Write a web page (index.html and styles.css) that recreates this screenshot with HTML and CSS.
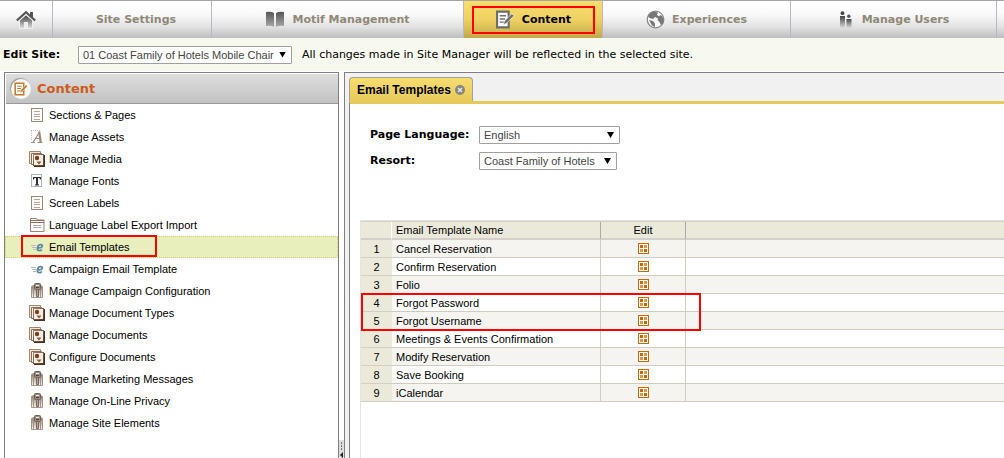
FILE: index.html
```html
<!DOCTYPE html>
<html lang="en">
<head>
<meta charset="utf-8">
<title>Site Manager - Content</title>
<link rel="stylesheet" href="styles.css">
</head>
<body>
<svg class="sprite" aria-hidden="true">
  <defs>
    <linearGradient id="g-dark" x1="0" y1="0" x2="0" y2="1"><stop offset="0" stop-color="#555"/><stop offset="1" stop-color="#aaa"/></linearGradient>
    <linearGradient id="g-fade" x1="0" y1="0" x2="0" y2="1"><stop offset="0" stop-color="#444"/><stop offset="1" stop-color="#ddd"/></linearGradient>
    <linearGradient id="g-brown" x1="0" y1="0" x2="0" y2="1"><stop offset="0" stop-color="#8b7768"/><stop offset="1" stop-color="#fbf9f7"/></linearGradient>
    <linearGradient id="g-card" x1="0" y1="0" x2="1" y2="1"><stop offset="0" stop-color="#a08468"/><stop offset="1" stop-color="#5c3d25"/></linearGradient>
    <symbol id="i-page" viewBox="0 0 16 16"><rect x="2.5" y="1.5" width="11" height="13" fill="#fdfbf9" stroke="#a08878"/><path d="M5 4.5h6M5 7.5h6M5 9.5h6M5 12.5h6" stroke="#b5a598"/></symbol>
    <symbol id="i-asset" viewBox="0 0 16 16"><path d="M2 1.5h9M2.500 2v9" stroke="#c8bfb8" stroke-dasharray="1 1" fill="none"/><path d="M2 13.500h4M4 13.500L10.500 3M6 9.500h5M8.500 13.500h5" stroke="#9b8b7f" stroke-width="1.200" fill="none"/><path d="M10.200 2.500l1.500 11" stroke="#9b8b7f" stroke-width="2.200"/></symbol>
    <symbol id="i-media" viewBox="0 0 16 16"><path d="M.5 .5h11v2h-8v10h-3z" fill="#efe7df" stroke="#a58468"/><path d="M2.500 2.500h10V5H5v8.500H2.500z" fill="#f7f1ea" stroke="#8d6c50"/><path d="M15.200 4v11.200H5" fill="none" stroke="#4c3220" stroke-width="1.600"/><rect x="4.500" y="3.500" width="10" height="11" fill="#f4eee8" stroke="url(#g-card)"/><circle cx="8" cy="7" r="2.200" fill="#7a4118"/><path d="M7.500 10.500h5L10 13.500z" fill="#8f5a2e"/></symbol>
    <symbol id="i-font" viewBox="0 0 16 16"><rect x="2.500" y="1.500" width="10" height="12" fill="#fbfdfe" stroke="#a9b5bb"/><path d="M4 4h8v2.500h-1L10.500 5H9v6.200l1 .3v1H6v-1l1-.3V5H5.500L5 6.500H4z" fill="#333"/></symbol>
    <symbol id="i-label" viewBox="0 0 16 16"><path d="M1.500 4V1.500h6l1 1.500h6.500v11.500H1.500z" fill="#fcfaf8" stroke="#9d8473"/><path d="M1 3.500h14M1 5.500h14" stroke="#8a705d"/><path d="M4 8.500h8M4 10.500h8" stroke="#a8aeb4"/></symbol>
    <symbol id="i-mail" viewBox="0 0 16 16"><path d="M2 6.500h5M3 8.500h4M4 10.500h3" stroke="#b4bcc0"/><path d="M8.300 8.700c3.500.6 5.200-.5 5-2-.2-1.600-3.200-1.500-4.300.5-1.300 2.300-.7 4.500 1.200 4.500 1.100 0 2-.4 2.700-1.200" fill="none" stroke="#5c87a0" stroke-width="1.800"/></symbol>
    <symbol id="i-site" viewBox="0 0 16 16"><path d="M2.500 3.500l2-1v12h-2zM4.500 2.500h7v12h-7zM13.500 3.500l-2-1v12h2z" fill="url(#g-brown)" stroke="#a59486"/><rect x="5.500" y=".5" width="6" height="6" rx="1" fill="#9a8e84" stroke="#6f5e52"/><path d="M7 2.500h3" stroke="#eee8e2"/><path d="M7 4.500h3" stroke="#4d3d32"/><path d="M7.500 6.500h2v7h-2z" fill="#b5a69a" stroke="#77665a"/></symbol>
    <symbol id="i-grid" viewBox="0 0 11 11"><rect x=".5" y=".5" width="10" height="10" fill="#fff" stroke="#cc6a00"/><path d="M2 2h3v3H2zM6 6h3v3H6z" fill="#cc6600"/><path d="M6 2h3v3H6zM2 6h3v3H2z" fill="#dd9850"/></symbol>
    <symbol id="i-note" viewBox="0 0 18 18"><path d="M1.500 1.500h11v15h-11z" fill="#fff" stroke="currentColor" stroke-width="2"/><path d="M4 5.500h6M4 8.500h5M4 11.500h4" stroke="currentColor" stroke-width="1.300"/><path d="M7.500 14l1-3.500L15.500 3.500l2 2-7 7z" fill="currentColor" stroke="#fff" stroke-width=".6"/></symbol>
  </defs>
</svg>

<nav class="nav" aria-label="Main">
  <a class="nav-item" href="#" aria-label="Home"><svg width="20" height="20" viewBox="0 0 20 20"><path d="M3 10.500L10 4l7 6.500V19H3z" fill="#eee"/><path d="M4 10.500L10 5.500l6 5V18h-4v-6H8v6H4z" fill="url(#g-fade)"/><path d="M14 2h3v5h-3z" fill="#555"/><path d="M.8 10.500L10 2.200l9.200 8.300" fill="none" stroke="#555" stroke-width="2.200"/></svg></a>
  <a class="nav-item plain" href="#">Site Settings</a>
  <a class="nav-item" href="#"><svg width="20" height="17" viewBox="0 0 20 17"><path d="M1 1q5-1 8 1v14q-3-2-8-1zM19 1q-5-1-8 1v14q3-2 8-1z" fill="url(#g-dark)"/></svg>Motif Management</a>
  <a class="nav-item active" href="#" aria-current="page"><svg class="note" width="20" height="19"><use href="#i-note"/></svg>Content</a>
  <a class="nav-item" href="#"><svg width="19" height="19" viewBox="0 0 19 19"><circle cx="9.500" cy="9.500" r="8.300" fill="#fafafa" stroke="#888" stroke-width="1.300"/><path d="M2 6l3-3.500 3-1 4 1-1 2.500 3 2-2 1.500L9 7 7 9 3.500 8zM3 10l4 1 2 2.500L9 17l-3-1.500zM14 5l2 1 1.500 3-.5 4-2 2-1.500-3-2-2z" fill="#777"/></svg>Experiences</a>
  <a class="nav-item" href="#"><svg width="17" height="18" viewBox="0 0 17 18"><circle cx="4.500" cy="2.200" r="1.900" fill="#444"/><path d="M2 5h5v12H2z" fill="url(#g-fade)"/><circle cx="10.800" cy="5.200" r="1.700" fill="#555"/><path d="M8.500 8h5v9h-5z" fill="url(#g-fade)"/></svg>Manage Users</a>
  <span class="nav-item"></span>
</nav>

<div class="sitebar">
  <label for="site">Edit Site:</label>
  <span class="pick site"><select id="site"><option>01 Coast Family of Hotels Mobile Chair</option></select></span>
  <span>All changes made in Site Manager will be reflected in the selected site.</span>
</div>

<div class="workspace">
  <aside class="side">
    <h2 class="side-title"><span class="disc"><svg width="14" height="14"><use href="#i-note"/></svg></span>Content</h2>
    <ul class="menu">
      <li><a href="#"><svg><use href="#i-page"/></svg>Sections &amp; Pages</a></li>
      <li><a href="#"><svg><use href="#i-asset"/></svg>Manage Assets</a></li>
      <li><a href="#"><svg><use href="#i-media"/></svg>Manage Media</a></li>
      <li><a href="#"><svg><use href="#i-font"/></svg>Manage Fonts</a></li>
      <li><a href="#"><svg><use href="#i-page"/></svg>Screen Labels</a></li>
      <li><a href="#"><svg><use href="#i-label"/></svg>Language Label Export Import</a></li>
      <li class="selected"><a href="#"><svg><use href="#i-mail"/></svg>Email Templates</a><span class="mark mark-menu"></span></li>
      <li><a href="#"><svg><use href="#i-mail"/></svg>Campaign Email Template</a></li>
      <li><a href="#"><svg><use href="#i-site"/></svg>Manage Campaign Configuration</a></li>
      <li><a href="#"><svg><use href="#i-media"/></svg>Manage Document Types</a></li>
      <li><a href="#"><svg><use href="#i-media"/></svg>Manage Documents</a></li>
      <li><a href="#"><svg><use href="#i-media"/></svg>Configure Documents</a></li>
      <li><a href="#"><svg><use href="#i-site"/></svg>Manage Marketing Messages</a></li>
      <li><a href="#"><svg><use href="#i-site"/></svg>Manage On-Line Privacy</a></li>
      <li><a href="#"><svg><use href="#i-site"/></svg>Manage Site Elements</a></li>
    </ul>
  </aside>
  <div class="splitter"><span class="handle"><svg width="5" height="18" viewBox="0 0 5 18"><path d="M2.500 2v9" stroke="#777" stroke-dasharray="2 1"/><path d="M4 12v6L1 15z" fill="#222"/></svg></span></div>

  <main class="main">
    <div class="tabs">
      <div class="tab">Email Templates<button type="button" aria-label="Close tab"><svg width="10" height="10" viewBox="0 0 10 10"><circle cx="5" cy="5" r="5" fill="#858585"/><path d="M3 3l4 4M7 3L3 7" stroke="#f4f0e0" stroke-width="1.300"/></svg></button></div>
    </div>
    <div class="pane">
      <form class="filters">
        <label for="lang">Page Language:</label>
        <span class="pick lang"><select id="lang"><option>English</option></select></span>
        <label for="resort">Resort:</label>
        <span class="pick resort"><select id="resort"><option>Coast Family of Hotels</option></select></span>
      </form>
      <div class="grid">
        <table>
          <colgroup><col class="c-num"><col class="c-name"><col class="c-edit"><col></colgroup>
          <thead><tr><th></th><th class="name">Email Template Name</th><th>Edit</th><th></th></tr></thead>
          <tbody>
            <tr><th>1</th><td>Cancel Reservation</td><td><button type="button" aria-label="Edit Cancel Reservation"><svg><use href="#i-grid"/></svg></button></td><td></td></tr>
            <tr><th>2</th><td>Confirm Reservation</td><td><button type="button" aria-label="Edit Confirm Reservation"><svg><use href="#i-grid"/></svg></button></td><td></td></tr>
            <tr><th>3</th><td>Folio</td><td><button type="button" aria-label="Edit Folio"><svg><use href="#i-grid"/></svg></button></td><td></td></tr>
            <tr><th>4</th><td>Forgot Password</td><td><button type="button" aria-label="Edit Forgot Password"><svg><use href="#i-grid"/></svg></button></td><td></td></tr>
            <tr><th>5</th><td>Forgot Username</td><td><button type="button" aria-label="Edit Forgot Username"><svg><use href="#i-grid"/></svg></button></td><td></td></tr>
            <tr><th>6</th><td>Meetings &amp; Events Confirmation</td><td><button type="button" aria-label="Edit Meetings &amp; Events Confirmation"><svg><use href="#i-grid"/></svg></button></td><td></td></tr>
            <tr><th>7</th><td>Modify Reservation</td><td><button type="button" aria-label="Edit Modify Reservation"><svg><use href="#i-grid"/></svg></button></td><td></td></tr>
            <tr><th>8</th><td>Save Booking</td><td><button type="button" aria-label="Edit Save Booking"><svg><use href="#i-grid"/></svg></button></td><td></td></tr>
            <tr><th>9</th><td>iCalendar</td><td><button type="button" aria-label="Edit iCalendar"><svg><use href="#i-grid"/></svg></button></td><td></td></tr>
          </tbody>
        </table>
        <span class="mark mark-rows"></span>
      </div>
    </div>
  </main>
</div>
</body>
</html>
```
FILE: styles.css
```css
* { box-sizing: border-box; }

body {
  margin: 0;
  min-height: 100vh;
  display: flex;
  flex-direction: column;
  background: #fff;
  color: #000;
  font: 11px/18px "Liberation Sans", Arial, sans-serif;
}

a { color: inherit; text-decoration: none; }
button { padding: 0; border: 0; background: none; display: block; }
svg { display: block; flex: none; }
.sprite { position: absolute; width: 0; height: 0; }

/* Top navigation */
.nav {
  display: grid;
  grid-template-columns: 53px 159fr 252fr 139fr 188fr 206fr 7px;
  height: 38px;
  border-top: 1px solid #a5a5a5;
  font: bold 11px/18px "DejaVu Sans", Verdana, sans-serif;
}
.nav-item {
  display: flex;
  align-items: center;
  justify-content: center;
  gap: 7px;
  color: #8f8877;
  border-right: 1px solid #b9b6c9;
  background: linear-gradient(#fff 0%, #fafafa 35%, #e2e2e2 70%, #bdbdbd 100%);
}
.nav-item:last-child { border-right: 0; }
.plain { padding-left: 8px; }
.active {
  position: relative;
  color: #000;
  background: linear-gradient(#f7dd6c 0%, #efd163 50%, #d9bd56 75%, #c2a74c 100%);
}
.active::after {
  content: "";
  position: absolute;
  inset: 5px 7px 4px 8px;
  border: 2px solid #f00;
}
.note { color: #6d6c68; }

/* Site selector */
.sitebar {
  display: flex;
  align-items: center;
  height: 33px;
  padding-left: 3px;
  background: #f8f9ee;
  font: 11px/18px "DejaVu Sans", Verdana, sans-serif;
}
.sitebar label { width: 75px; }
.sitebar label, .filters label { font: bold 11px/18px "DejaVu Sans", Verdana, sans-serif; }
.sitebar .pick { margin-right: 10px; }

.pick { position: relative; display: block; }
.pick::after {
  content: "";
  position: absolute;
  right: 6px;
  top: 6px;
  width: 7px;
  height: 6px;
  background: #000;
  clip-path: polygon(0 0, 100% 0, 50% 100%);
  pointer-events: none;
}
.pick select {
  appearance: none;
  display: block;
  width: 100%;
  height: 18px;
  padding: 0 4px;
  border: 1px solid #a0a0a0;
  border-radius: 1px;
  background: #fff;
  color: #444;
  font: 11px/16px "Liberation Sans", Arial, sans-serif;
}
.site { width: 214px; }
.lang { width: 141px; }
.resort { width: 138px; }

/* Panels */
.workspace { flex: 1; display: flex; padding: 1px 0 0 4px; }
.side { width: 335px; border: solid #808080; border-width: 1px 1px 0; }
.side-title {
  display: flex;
  align-items: center;
  gap: 6px;
  height: 30px;
  margin: 1px 0 0 1px;
  padding-left: 5px;
  color: #cc5c1a;
  border-bottom: 1px solid #999;
  background: linear-gradient(#dedede, #c2c2c2);
  font: bold 13px/18px "DejaVu Sans", Verdana, sans-serif;
}
.disc {
  display: grid;
  place-items: center;
  width: 20px;
  height: 20px;
  border-radius: 50%;
  background: #f8f8f8;
  box-shadow: -1px -1px 1px #999;
  color: #c47a2c;
}
.menu { margin: 0; padding: 0; list-style: none; }
.menu li { position: relative; border: 1px solid transparent; }
.menu a { display: flex; align-items: center; gap: 4px; height: 20px; padding-left: 23px; }
.menu svg { width: 16px; height: 16px; }
.menu .selected { background: #e8eebc; border: 1px dotted #dccb70; }

.mark { position: absolute; border: 2px solid #f00; pointer-events: none; }
.mark-menu { left: 15px; top: -2px; width: 136px; height: 22px; }
.mark-rows { left: 0; top: 72px; width: 340px; height: 38px; }

.splitter { width: 5px; display: flex; flex-direction: column; justify-content: flex-end; }
.handle { background: #ddd; }

.main {
  flex: 1;
  display: flex;
  flex-direction: column;
  padding: 4px 0 0 4px;
  border: solid #808080;
  border-width: 1px 0 0 1px;
  background: #f1f1f1;
}
.tabs { display: flex; height: 24px; }
.tab {
  display: flex;
  align-items: center;
  gap: 4px;
  padding: 0 7px;
  border: 1px solid #a0a0a0;
  border-bottom: 0;
  border-radius: 4px 4px 0 0;
  background: linear-gradient(#f7dd70, #e6cb5c);
  font-size: 12px;
  font-weight: bold;
}
.pane {
  flex: 1;
  padding: 22px 0 0 10px;
  border-top: 3px solid #e5ca5b;
  border-left: 1px solid #808080;
  background: #fff;
}
.filters {
  display: grid;
  grid-template-columns: 109px 1fr;
  row-gap: 8px;
  padding: 0 0 0 10px;
  margin-bottom: 50px;
}

/* Template list */
.grid { position: relative; min-height: 238px; border: solid #e4e4e4; border-width: 1px 0 0 1px; }
table { width: 100%; table-layout: fixed; border-collapse: separate; border-spacing: 0; border-top: 1px solid #d2cfc3; }
.c-num { width: 31px; }
.c-name { width: 209px; }
.c-edit { width: 85px; }
th { font-weight: normal; }
th, td { height: 18px; padding: 0; line-height: 16px; }
thead th { background: #ebeada; border-right: 1px solid #aaa; border-bottom: 2px solid #d2d0c8; height: 18px; }
thead th:first-child { border-right-color: #fff; }
thead th.name { text-align: left; padding-left: 4px; }
tbody th { background: #ebeada; border-bottom: 1px solid #d2cfc3; }
tbody td { border-right: 1px solid #d0cdc0; border-bottom: 1px solid #d0cdc0; padding-left: 4px; background: #fff; }
tbody td:nth-child(3) { padding: 0; }
tbody td:last-child, thead th:last-child { border-right: 0; }
tbody tr:nth-child(odd) td { background: #f5f4f0; }
td button { margin: 0 auto; }
td svg { width: 11px; height: 11px; }
```
